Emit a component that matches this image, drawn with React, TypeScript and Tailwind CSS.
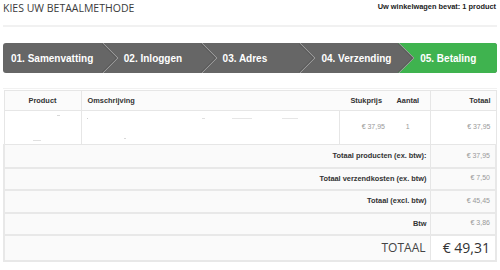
const steps = ['01. Samenvatting', '02. Inloggen', '03. Adres', '04. Verzending', '05. Betaling']

const totals = [
  { label: 'Totaal producten (ex. btw):', value: '€ 37,95', h: 'h-[23px]' },
  { label: 'Totaal verzendkosten (ex. btw)', value: '€ 7,50', h: 'h-[22px]' },
  { label: 'Totaal (excl. btw)', value: '€ 45,45', h: 'h-[23px]' },
  { label: 'Btw', value: '€ 3,86', h: 'h-[22px]' },
]

const Arrow = () => (
  <svg className="absolute left-full top-0 z-10" width="17" height="30" viewBox="0 0 17 30">
    <polygon points="0,0 16,15 0,30" fill="#666666" />
    <polyline points="0,-1 16,15 0,31" fill="none" stroke="#9a9a9a" strokeWidth="1" />
    <polyline points="-2,-1 14,15 -2,31" fill="none" stroke="#5c5c5c" strokeWidth="1" />
  </svg>
)

const App = () => {
  return (
    <div className="w-[500px] h-[270px] bg-white px-[3px] overflow-hidden" style={{ fontFamily: '"Liberation Sans", Arial, sans-serif' }}>
      <div className="flex justify-between items-start pt-[1px] h-[25px]">
        <h1 className="text-[10.5px] text-[#3a3a3a] font-['Open_Sans',sans-serif] leading-[14px]">KIES UW BETAALMETHODE</h1>
        <span className="text-[7.4px] font-bold text-[#222] leading-[12px] pr-[1px]">Uw winkelwagen bevat: 1 product</span>
      </div>
      <div className="h-[2px] bg-[#f1f1f1]" />

      <div className="flex mt-[16px] h-[30px] rounded-[3px] overflow-hidden bg-[#666666]">
        {steps.map((step, i) => (
          <div
            key={step}
            className={`relative flex-1 min-w-0 whitespace-nowrap flex items-center text-white font-bold text-[10px] ${i === 4 ? 'bg-[#3fb34f]' : ''}`}
          >
            <span className={i === 0 ? 'pl-[8px]' : 'pl-[22px]'}>{step}</span>
            {i < 4 && <Arrow />}
          </div>
        ))}
      </div>

      <div className="h-[1px] bg-[#f1f1f1] mt-[15px]" />

      <table className="w-full table-fixed border-collapse mt-[1px] text-[7.4px]">
        <colgroup>
          <col className="w-[77px]" />
          <col className="w-[258px]" />
          <col className="w-[47px]" />
          <col className="w-[44px]" />
          <col />
        </colgroup>
        <thead>
          <tr className="h-[20px] bg-[#fbfbfb] border border-[#e6e6e6] font-bold text-[#333]">
            <th className="border-r border-[#e6e6e6] text-center">Product</th>
            <th className="text-left pl-[6px]">Omschrijving</th>
            <th className="text-right pr-[4px]">Stukprijs</th>
            <th className="text-center">Aantal</th>
            <th className="border-l border-[#e6e6e6] text-right pr-[5px]">Totaal</th>
          </tr>
        </thead>
        <tbody>
          <tr className="h-[34px] bg-white border border-[#e6e6e6] text-[7px] text-[#999]">
            <td className="border-r border-[#e6e6e6] relative">
              <div className="absolute left-[52px] top-[4px] w-[3px] h-px bg-[#d8d8d8]" />
              <div className="absolute left-[28px] top-[29px] w-[8px] h-px bg-[#e0e0e0]" />
            </td>
            <td className="border-r border-[#e6e6e6] relative">
              <div className="absolute left-[5px] top-[7px] w-px h-px bg-[#cfcfcf]" />
              <div className="absolute left-[120px] top-[7px] w-[3px] h-px bg-[#e0e0e0]" />
              <div className="absolute left-[150px] top-[7px] w-[20px] h-px bg-[#e6e6e6]" />
              <div className="absolute left-[200px] top-[7px] w-[16px] h-px bg-[#e6e6e6]" />
              <div className="absolute left-[42px] top-[27px] w-[2px] h-px bg-[#d8d8d8]" />
            </td>
            <td className="text-right pr-[1px]">€ 37,95</td>
            <td className="text-center">1</td>
            <td className="border-l border-[#e6e6e6] text-right pr-[5px]">€ 37,95</td>
          </tr>
          {totals.map((row) => (
            <tr key={row.label} className={`${row.h} bg-[#fafafa] border-x-2 border-b-2 border-[#e8e8e8]`}>
              <td colSpan={4} className="text-right pr-[3px] font-bold text-[#333] border-r border-[#e6e6e6]">{row.label}</td>
              <td className="text-right pr-[5px] text-[7px] text-[#999]">{row.value}</td>
            </tr>
          ))}
          <tr className="h-[26px] bg-[#fafafa] border-x-2 border-b-2 border-[#e8e8e8]">
            <td colSpan={4} className="text-right pr-[4px] text-[12px] text-[#444] font-['Open_Sans',sans-serif] border-r border-[#e6e6e6]">TOTAAL</td>
            <td className="text-right pr-[5px] text-[14px] text-[#333] bg-white font-['Open_Sans',sans-serif]">€ 49,31</td>
          </tr>
        </tbody>
      </table>
    </div>
  )
}

export default App
